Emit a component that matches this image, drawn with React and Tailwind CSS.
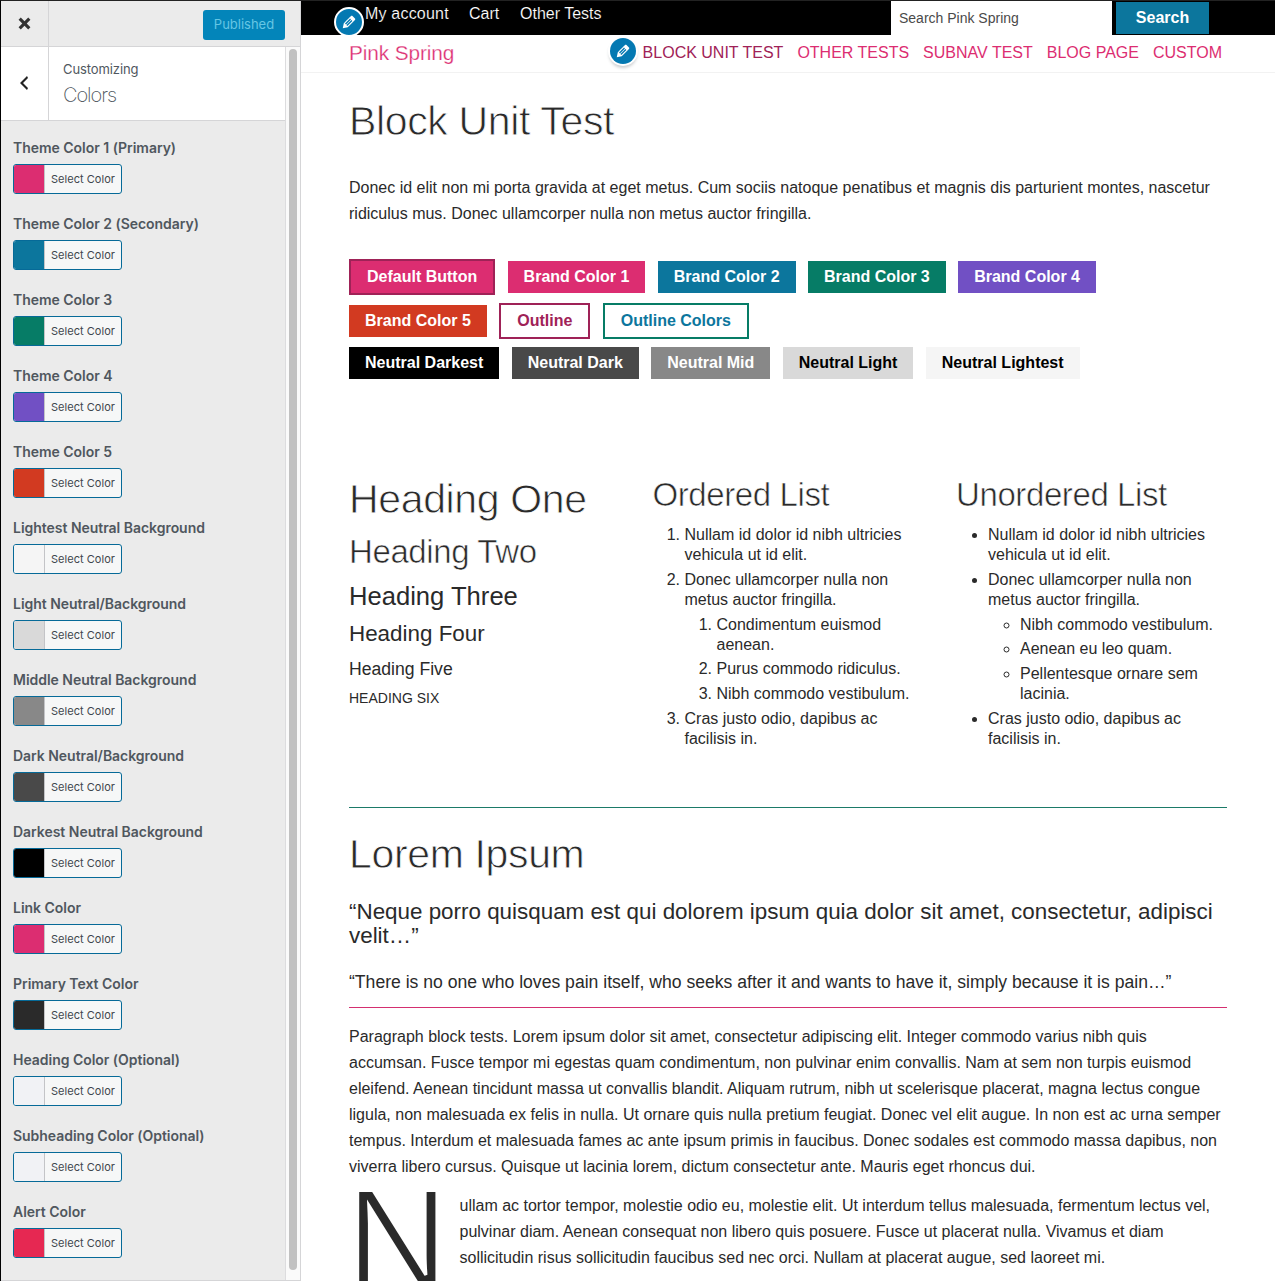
import React from "react";

const COLORS = [
  ["Theme Color 1 (Primary)", "#dc2d71"],
  ["Theme Color 2 (Secondary)", "#0c769d"],
  ["Theme Color 3", "#067c66"],
  ["Theme Color 4", "#7150c4"],
  ["Theme Color 5", "#d23a21"],
  ["Lightest Neutral Background", "#f5f5f5"],
  ["Light Neutral/Background", "#d9d9d9"],
  ["Middle Neutral Background", "#888888"],
  ["Dark Neutral/Background", "#494949"],
  ["Darkest Neutral Background", "#000000"],
  ["Link Color", "#dc2d71"],
  ["Primary Text Color", "#2a2a2a"],
  ["Heading Color (Optional)", "#f1f2f5"],
  ["Subheading Color (Optional)", "#f1f2f5"],
  ["Alert Color", "#e62852"],
];

function Pencil({ className }) {
  return (
    <span className={`flex items-center justify-center rounded-full bg-[#0479b2] ${className}`}>
      <svg viewBox="0 0 20 20" className="size-[18px] shrink-0 fill-white">
        <path d="M13.89 3.39l2.71 2.72c.46.46.42 1.24.03 1.64l-8.01 8.02-5.56 1.16 1.16-5.58s7.6-7.63 7.99-8.03c.39-.39 1.22-.39 1.68.07zm-2.73 2.79l-5.59 5.61 1.11 1.11 5.54-5.65zm-2.97 8.23l5.58-5.6-1.07-1.08-5.59 5.6z" />
      </svg>
    </span>
  );
}

function ColorControl({ label, color }) {
  return (
    <li className="mb-[18px]">
      <div className="mb-1 h-6 text-[14px] leading-6 font-semibold tracking-[-0.03px] whitespace-nowrap text-[#50575e]">
        {label}
      </div>
      <button className="flex h-[30px] w-[109px] overflow-hidden rounded-[3px] border border-[#066a98] bg-[#f6f7f7]">
        <span className="w-[30px] shrink-0" style={{ backgroundColor: color }} />
        <span className="h-full flex-1 border-l border-[#c3c4c7] text-center text-[11px] leading-[28px] tracking-[0.03px] whitespace-nowrap text-[#40464d]">
          Select Color
        </span>
      </button>
    </li>
  );
}

function Sidebar() {
  return (
    <aside className="flex h-full w-[300px] shrink-0 flex-col border-r border-b border-[#d5d5d7] bg-[#ebebeb] font-['Inter',sans-serif]">
      <header className="flex h-[46px] shrink-0 items-center justify-between border-b border-[#d5d5d7]">
        <div className="flex h-full w-12 items-center justify-center border-r border-[#d5d5d7]">
          <svg viewBox="0 0 20 20" className="size-[21px] fill-[#333]">
            <path d="M12.12 10l3.53 3.53-2.12 2.12L10 12.12l-3.54 3.54-2.12-2.12L7.88 10 4.34 6.46l2.12-2.12L10 7.88l3.54-3.53 2.12 2.12z" />
          </svg>
        </div>
        <button className="mt-[3px] mr-[15px] h-[30px] w-[82px] rounded-[3px] bg-[#0385ba] text-[13px] text-[#66c6e4]">
          Published
        </button>
      </header>
      <div className="flex min-h-0 flex-1">
        <div className="flex-1 border-r border-[#dcdcde]">
          <div className="flex h-[74px] border-b border-[#d5d5d7] bg-white">
            <div className="flex w-12 items-center justify-center border-r border-[#d5d5d7] pr-[2px] pb-[2px]">
              <svg viewBox="0 0 20 20" className="size-5 fill-[#222]">
                <path d="M14 5l-5 5 5 5-1 2-7-7 7-7z" />
              </svg>
            </div>
            <div className="pt-3 pl-[14px] text-[#50575e]">
              <div className="text-[13px] leading-5 tracking-[-0.1px]">Customizing</div>
              <div className="mt-[3px] text-[20px] leading-[26px] font-extralight tracking-[-1.05px]">Colors</div>
            </div>
          </div>
          <ul className="pt-[15px] pl-3">
            {COLORS.map(([label, color]) => (
              <ColorControl key={label} label={label} color={color} />
            ))}
          </ul>
        </div>
        <div className="w-[14px] bg-[#fafafa] pt-[2px] pl-[3px]">
          <div className="h-[1221px] w-2 rounded-full bg-[#c1c1c1]" />
        </div>
      </div>
    </aside>
  );
}

function TopBar() {
  return (
    <div className="relative flex h-[34px] overflow-hidden bg-black pl-16 text-white">
      <Pencil className="absolute top-[6px] left-[33px] size-[30px] border-2 border-white" />
      <nav className="flex gap-5 text-[16px] leading-[26px] [-webkit-text-stroke:0.15px_black]">
        <a className="w-[84px] tracking-[0.2px] whitespace-nowrap">My account</a>
        <a className="w-[31px]">Cart</a>
        <a>Other Tests</a>
      </nav>
      <div className="ml-auto flex items-start pr-[66px]">
        <div className="h-[34px] w-[221px] bg-white pl-2 text-[14px] leading-[34px] text-[#4a4a4a]">Search Pink Spring</div>
        <button className="mt-px ml-1 h-8 w-[93px] bg-[#0c769d] text-[16px] font-bold leading-8">Search</button>
      </div>
    </div>
  );
}

function SiteHeader() {
  return (
    <div className="flex h-[38px] items-start justify-between border-b border-[#f2f2f2] pr-[53px] pl-12 text-[#dc2d71]">
      <div className="text-[20.8px] leading-[36px] tracking-[-0.1px] [-webkit-text-stroke:0.25px_white]">Pink Spring</div>
      <nav className="flex items-start gap-[14px] text-[16px] leading-[35px]">
        <Pencil className="mt-[3px] -mr-[7px] size-[26px] shadow-[0_0_0_2px_white,0_3px_3px_1px_rgba(60,67,74,0.25)]" />
        <a className="text-[#9f2257]">BLOCK UNIT TEST</a>
        <a>OTHER TESTS</a>
        <a>SUBNAV TEST</a>
        <a>BLOG PAGE</a>
        <a>CUSTOM</a>
      </nav>
    </div>
  );
}

function Btn({ className, children }) {
  return <a className={`block px-4 leading-8 font-bold whitespace-nowrap ${className}`}>{children}</a>;
}

function Buttons() {
  return (
    <div className="mt-8 flex flex-col gap-2 text-[16px] text-white">
      <div className="flex items-center gap-[12.4px]">
        <Btn className="border-2 border-[#9f2257] bg-[#dc2d71]">Default Button</Btn>
        <Btn className="bg-[#dc2d71]">Brand Color 1</Btn>
        <Btn className="bg-[#0c769d]">Brand Color 2</Btn>
        <Btn className="bg-[#067c66]">Brand Color 3</Btn>
        <Btn className="bg-[#7150c4]">Brand Color 4</Btn>
      </div>
      <div className="flex items-center gap-[12.4px]">
        <Btn className="bg-[#d23a21]">Brand Color 5</Btn>
        <Btn className="border-2 border-[#9f2257] text-[#9f2257]">Outline</Btn>
        <Btn className="border-2 border-[#067c66] text-[#0c769d]">Outline Colors</Btn>
      </div>
      <div className="flex items-center gap-[12.4px]">
        <Btn className="bg-black">Neutral Darkest</Btn>
        <Btn className="bg-[#494949]">Neutral Dark</Btn>
        <Btn className="bg-[#888888]">Neutral Mid</Btn>
        <Btn className="bg-[#d9d9d9] text-black">Neutral Light</Btn>
        <Btn className="bg-[#f5f5f5] text-black">Neutral Lightest</Btn>
      </div>
    </div>
  );
}

function H1({ className = "", children }) {
  return (
    <h1 className={`text-[41px] leading-[48px] tracking-[-0.35px] [-webkit-text-stroke:0.8px_white] ${className}`}>
      {children}
    </h1>
  );
}

function H2({ className = "", children }) {
  return (
    <h2 className={`text-[33px] leading-10 tracking-[-0.4px] [-webkit-text-stroke:0.6px_white] ${className}`}>
      {children}
    </h2>
  );
}

function Columns() {
  return (
    <div className="mt-24 grid h-[332px] grid-cols-[270.5px_270.5px_270.5px] gap-[33px]">
      <div>
        <H1>Heading One</H1>
        <H2 className="mt-[9px]">Heading Two</H2>
        <h3 className="mt-2 text-[25.6px] leading-8">Heading Three</h3>
        <h4 className="mt-2 text-[22.4px] leading-7">Heading Four</h4>
        <h5 className="mt-[9px] text-[17.6px] leading-6">Heading Five</h5>
        <h6 className="mt-[7px] text-[14px] leading-5">HEADING SIX</h6>
      </div>
      <div>
        <H2>Ordered List</H2>
        <ol className="mt-[10px] list-decimal space-y-[4.8px] pl-8 leading-5">
          <li>Nullam id dolor id nibh ultricies vehicula ut id elit.</li>
          <li>
            Donec ullamcorper nulla non metus auctor fringilla.
            <ol className="mt-[4.8px] list-decimal space-y-[4.8px] pl-8">
              <li>Condimentum euismod aenean.</li>
              <li>Purus commodo ridiculus.</li>
              <li>Nibh commodo vestibulum.</li>
            </ol>
          </li>
          <li>Cras justo odio, dapibus ac facilisis in.</li>
        </ol>
      </div>
      <div>
        <H2>Unordered List</H2>
        <ul className="mt-[10px] list-disc space-y-[4.8px] pl-8 leading-5">
          <li>Nullam id dolor id nibh ultricies vehicula ut id elit.</li>
          <li>
            Donec ullamcorper nulla non metus auctor fringilla.
            <ul className="mt-[4.8px] list-[circle] space-y-[4.8px] pl-8">
              <li>Nibh commodo vestibulum.</li>
              <li>Aenean eu leo quam.</li>
              <li>Pellentesque ornare sem lacinia.</li>
            </ul>
          </li>
          <li>Cras justo odio, dapibus ac facilisis in.</li>
        </ul>
      </div>
    </div>
  );
}

export default function App() {
  return (
    <div className="flex h-[1281px] w-[1275px] overflow-hidden border-t border-l border-t-[#222] border-l-black bg-white">
      <Sidebar />
      <main className="h-full min-w-0 flex-1 overflow-hidden font-['Liberation_Sans',Arial,sans-serif] text-[16px] text-[#2a2a2a]">
        <TopBar />
        <SiteHeader />
        <article className="w-[926px] pl-12">
          <H1 className="mt-6">Block Unit Test</H1>
          <p className="mt-[30px] leading-[26px]">
            Donec id elit non mi porta gravida at eget metus. Cum sociis natoque penatibus et magnis dis parturient
            montes, nascetur ridiculus mus. Donec ullamcorper nulla non metus auctor fringilla.
          </p>
          <Buttons />
          <Columns />
          <hr className="border-[#1b7a68]" />
          <H1 className="mt-[22px]">Lorem Ipsum</H1>
          <h4 className="mt-[22px] text-[22.4px] leading-6">
            “Neque porro quisquam est qui dolorem ipsum quia dolor sit amet, consectetur, adipisci velit…”
          </h4>
          <h5 className="mt-[22px] text-[17.6px] leading-6 whitespace-nowrap">
            “There is no one who loves pain itself, who seeks after it and wants to have it, simply because it is pain…”
          </h5>
          <hr className="mt-[13px] border-[#d42f70]" />
          <p className="mt-4 leading-[26px]">
            Paragraph block tests. Lorem ipsum dolor sit amet, consectetur adipiscing elit. Integer commodo varius nibh
            quis accumsan. Fusce tempor mi egestas quam condimentum, non pulvinar enim convallis. Nam at sem non turpis
            euismod eleifend. Aenean tincidunt massa ut convallis blandit. Aliquam rutrum, nibh ut scelerisque placerat,
            magna lectus congue ligula, non malesuada ex felis in nulla. Ut ornare quis nulla pretium feugiat. Donec vel
            elit augue. In non est ac urna semper tempus. Interdum et malesuada fames ac ante ipsum primis in faucibus.
            Donec sodales est commodo massa dapibus, non viverra libero cursus. Quisque ut lacinia lorem, dictum
            consectetur ante. Mauris eget rhoncus dui.
          </p>
          <div className="mt-[13px] flex">
            <span className="-mt-[23px] -ml-[3px] w-[113.5px] shrink-0 text-[142px] leading-[140px] [-webkit-text-stroke:3px_white]">
              N
            </span>
            <p className="leading-[26px]">
              ullam ac tortor tempor, molestie odio eu, molestie elit. Ut interdum tellus malesuada, fermentum lectus
              vel, pulvinar diam. Aenean consequat non libero quis posuere. Fusce ut placerat nulla. Vivamus et diam
              sollicitudin risus sollicitudin faucibus sed nec orci. Nullam at placerat augue, sed laoreet mi.
            </p>
          </div>
        </article>
      </main>
    </div>
  );
}
